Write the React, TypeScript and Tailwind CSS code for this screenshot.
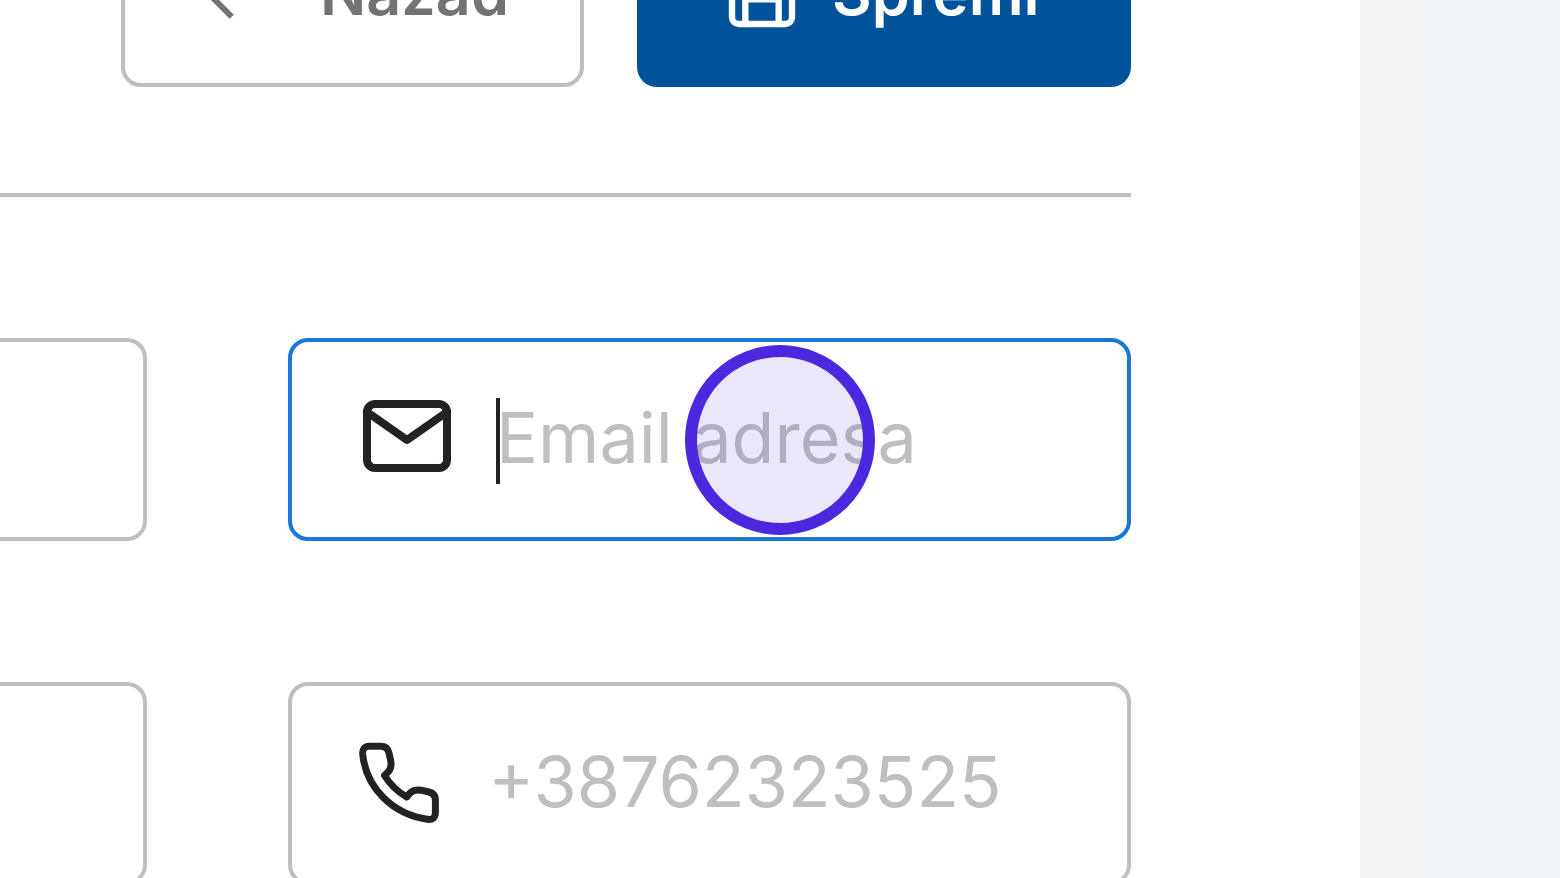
import type { ComponentProps, ReactNode } from 'react'
import { FiMail } from 'react-icons/fi'

interface FieldProps extends ComponentProps<'input'> {
  icon: ReactNode
  active?: boolean
  children?: ReactNode
}

function PhoneIcon() {
  return (
    <svg
      viewBox="0 1 88 88"
      className="mr-1 size-[88px] shrink-0"
      fill="none"
      stroke="currentColor"
      strokeWidth="7"
      strokeLinejoin="round"
    >
      <path d="M14 9.3H26C30.5 9.3 33 12 34 16L35.8 24C36.5 28.5 36 31.500 33.5 34.500L29.500 38.500C35.500 48 42 54.500 51.7 60L55 56C58 53.2 61.5 52.6 66 53.2L74 55C78.500 56.2 80.4 59 80.4 63V75.500C80.4 80.500 77.5 83 72.5 82.300C39 77.500 11 52 7.700 17C7.400 12.5 9.500 9.300 14 9.300Z" />
    </svg>
  )
}

function Field({ icon, active, children, ...input }: FieldProps) {
  return (
    <div
      className={`relative flex h-[203px] min-w-0 flex-1 items-center rounded-[20px] border-4 pb-1 text-[#222222] ${
        active ? 'border-[#1877d8] pl-[67px]' : 'border-[#bfbfbf] pl-[63px]'
      }`}
    >
      {icon}
      <input
        {...input}
        aria-label={input.placeholder}
        className="ml-[41px] h-[100px] min-w-0 flex-1 bg-transparent text-[70px] outline-none placeholder:text-[#bfbfbf]"
      />
      {children}
    </div>
  )
}

function SideInput({ label }: { label: string }) {
  return (
    <input
      aria-label={label}
      className="h-[203px] w-[147px] shrink-0 rounded-r-[20px] border-4 border-l-0 border-[#bfbfbf] bg-transparent px-6 text-[70px] outline-none"
    />
  )
}

export default function App() {
  return (
    <div className="flex h-screen overflow-hidden bg-[#f0f4f9] font-['Inter',sans-serif]">
      <main className="min-w-0 flex-1 bg-white pr-[229px]">
        <header className="flex h-[87px] items-end justify-end gap-[53px] overflow-hidden">
          <button
            type="button"
            className="flex h-[186px] w-[463px] shrink-0 items-center rounded-[20px] border-4 border-[#bfbfbf] pl-[51px] text-[61px] font-semibold text-[#737373]"
          >
            <svg viewBox="0 0 24 24" className="size-[88px]" fill="none" stroke="currentColor" strokeWidth="1.6">
              <path d="M15.2 18.2 9 12l6.2-6.2" />
            </svg>
            <span className="ml-14">Nazad</span>
          </button>
          <button
            type="button"
            className="flex h-[186px] w-[494px] shrink-0 items-center rounded-[20px] bg-[#00529b] pl-[85px] text-[61px] font-semibold text-white"
          >
            <svg
              viewBox="0 0 24 24"
              className="size-20"
              fill="none"
              stroke="currentColor"
              strokeWidth="1.9"
              strokeLinecap="round"
              strokeLinejoin="round"
            >
              <path d="M19 21H5a2 2 0 0 1-2-2V5a2 2 0 0 1 2-2h11l5 5v11a2 2 0 0 1-2 2z" />
              <path d="M17 21v-7.4H7V21M7 3v5h8" />
            </svg>
            <span className="ml-[30px]">Spremi</span>
          </button>
        </header>

        <hr className="mt-[106px] border-t-4 border-[#bfbfbf]" />

        <form className="mt-[141px] flex flex-col gap-[141px]">
          <div className="flex gap-[141px]">
            <SideInput label="Ime" />
            <Field
              active
              type="email"
              placeholder="Email adresa"
              icon={<FiMail className="mb-1 size-24 shrink-0" />}
            >
              {/* text caret */}
              <span className="absolute top-[56px] left-[204px] h-[86px] w-1 bg-[#222222]" />
              {/* click marker */}
              <span className="pointer-events-none absolute top-[3px] left-[393px] size-[190px] rounded-full border-[12px] border-[#4b27df] bg-[#4b27df]/11" />
            </Field>
          </div>
          <div className="flex gap-[141px]">
            <SideInput label="Prezime" />
            <Field type="tel" placeholder="+38762323525" icon={<PhoneIcon />} />
          </div>
        </form>
      </main>
      <aside className="w-[200px] shrink-0 border-l-[72px] border-[#f2f3f5]" />
    </div>
  )
}
